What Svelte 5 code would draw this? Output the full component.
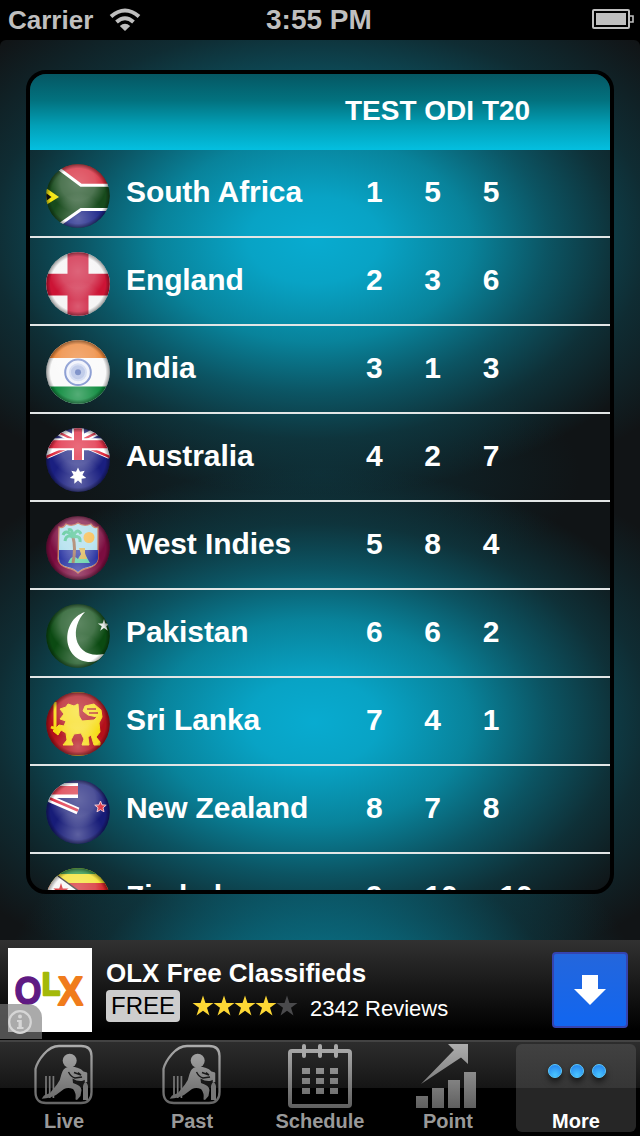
<script>
  const teams = [
    { name: "South Africa", flag: "za", ranks: [1, 5, 5] },
    { name: "England", flag: "en", ranks: [2, 3, 6] },
    { name: "India", flag: "in", ranks: [3, 1, 3] },
    { name: "Australia", flag: "au", ranks: [4, 2, 7] },
    { name: "West Indies", flag: "wi", ranks: [5, 8, 4] },
    { name: "Pakistan", flag: "pk", ranks: [6, 6, 2] },
    { name: "Sri Lanka", flag: "lk", ranks: [7, 4, 1] },
    { name: "New Zealand", flag: "nz", ranks: [8, 7, 8] },
    { name: "Zimbabwe", flag: "zw", ranks: [9, 10, 10] }
  ];

  const tabs = [
    { label: "Live", icon: "cricket" },
    { label: "Past", icon: "cricket" },
    { label: "Schedule", icon: "calendar" },
    { label: "Point", icon: "chart" },
    { label: "More", icon: "more" }
  ];

  let active = $state("More");

  // n-pointed star centred on cx, cy
  function star(cx, cy, n, outer, inner) {
    const pts = [];
    for (let i = 0; i < n * 2; i++) {
      const r = i % 2 ? inner : outer;
      const a = (Math.PI * i) / n - Math.PI / 2;
      pts.push(`${(cx + r * Math.cos(a)).toFixed(2)},${(cy + r * Math.sin(a)).toFixed(2)}`);
    }
    return pts.join(" ");
  }
</script>

{#snippet flagArt(code)}
  {#if code === "za"}
    <rect width="64" height="64" fill="#174a1c" />
    <path d="M10 0L34 20H64V0z" fill="#d51f32" />
    <path d="M10 64L35 46H64V64z" fill="#1c2588" />
    <path d="M12 4L35 21.3H64M13 61L35 45.5H64" fill="none" stroke="#fff" stroke-width="3" />
    <path d="M0 24L13 33L0 41z" fill="#f5e614" />
    <path d="M0 29L5.5 33L0 37z" fill="#111" />
  {:else if code === "en"}
    <rect width="64" height="64" fill="#f4f4f4" />
    <path d="M21.5 0H42.5V21.7H64V43.5H42.5V64H21.5V43.5H0V21.7H21.5z" fill="#cc1435" />
  {:else if code === "in"}
    <rect width="64" height="64" fill="#fafafa" />
    <rect width="64" height="18" fill="#ec7f2c" />
    <rect y="46.5" width="64" height="18" fill="#0b8a3c" />
    <circle cx="32" cy="32.3" r="12.8" fill="#eef1fb" stroke="#6f86c8" stroke-width="2" />
    <circle cx="32" cy="32.3" r="8" fill="#a9b9e2" stroke="#c9d4ef" stroke-width="2" />
    <circle cx="32" cy="32.3" r="3" fill="#4c68b4" />
  {:else if code === "au"}
    <rect width="64" height="64" fill="#1a1f80" />
    <path d="M0 27L32 13L64 27M6 0L32 13L58 0" fill="none" stroke="#fff" stroke-width="8" />
    <path d="M0 29L28 17M36 17L64 29M8 2L28 12M56 2L36 12" stroke="#dd2238" stroke-width="2.5" />
    <path d="M32 0V32M0 16.3H64" fill="none" stroke="#fff" stroke-width="12" />
    <path d="M32 0V32M0 16.3H64" fill="none" stroke="#de2038" stroke-width="8" />
    <polygon points={star(32, 48, 7, 8.5, 4.6)} fill="#fff" />
  {:else if code === "wi"}
    <rect width="64" height="64" fill="#7c0d40" />
    <path d="M13 11Q17 13 20 8Q26 11 32 7Q38 11 45 8Q48 13 52 11V43Q51 50 42 52Q36 53 32 57Q28 53 22 52Q13 50 12 43z" fill="#a8dcec" stroke="#c46a4b" stroke-width="1.3" />
    <path d="M13 34H52V43Q51 49 42 51Q36 52 32 56Q28 52 22 51Q13 49 13 43z" fill="#2530a0" />
    <circle cx="43" cy="21.5" r="5.5" fill="#f6b43a" />
    <path d="M22 47Q26 37 32 43Q35 36 40 40L44 47z" fill="#5ad0a0" />
    <path d="M27 21Q30 32 27 47" fill="none" stroke="#9a6a4c" stroke-width="3" />
    <path d="M27 21Q20 18 19 25M27 21Q20 12 17 19M27 21Q27 12 22 14M27 21Q31 11 35 18M27 21Q35 19 34 26" fill="none" stroke="#43c08c" stroke-width="3" />
    <path d="M33 32h6v5l2 6h-8l2-5z" fill="#d8b045" />
  {:else if code === "pk"}
    <rect width="64" height="64" fill="#0b4a12" />
    <path d="M39 8C14 16 15 58 45 58C50 58 55 55 58 50C29 56 22 25 39 8z" fill="#fff" />
    <polygon points={star(58, 21.5, 5, 6.5, 2.4)} fill="#e6ece6" />
  {:else if code === "lk"}
    <rect width="64" height="64" fill="#b3101a" />
    <path d="M0 0H64V4Q32-3 0 4zM0 64H64V59Q32 67 0 59z" fill="#e4b812" />
    <path d="M14 17L20 15L22 12L28 14L32 12L33 24L36 29L48 28L51 25L42 23L37 19L39 14L48 12L55 18L56 25L53 31L54 40L50 45L54 50V53H48L45 43L42 45L43 53H36L38 47L35 41L28 42L25 48L27 53H17L21 48L20 41L15 38L12 43L7 39L13 33L18 34L20 29L14 27L18 22z" fill="#f7dc14" stroke="#f7dc14" />
    <path d="M9 10V37M5 35L14 39" fill="none" stroke="#f7dc14" stroke-width="3" />
    <path d="M41 17H50M43 21H52" stroke="#b3101a" stroke-width="1.3" />
  {:else if code === "nz"}
    <rect width="64" height="64" fill="#171c78" />
    <path d="M0 3H32V18H0z" fill="#fff" />
    <path d="M0 6H32V14.500H0z" fill="#d92b3c" />
    <path d="M2 18L32 31" stroke="#fff" stroke-width="7" />
    <path d="M4 18.5L32 30.5" stroke="#dd2238" stroke-width="2.5" />
    <polygon points={star(54.5, 27, 5, 6, 2.6)} fill="#e02b3a" stroke="#f3c3cc" stroke-width="1" />
  {:else}
    <rect width="64" height="64" fill="#f3df1e" />
    <rect width="64" height="6" fill="#1e8a35" />
    <rect y="15" width="64" height="14" fill="#d2191f" />
    <path d="M0 0L12 8L34 24H0z" fill="#f6f6f6" />
    <path d="M12 8L34 24" stroke="#222" stroke-width="1.5" />
    <polygon points={star(15, 23, 5, 8, 3)} fill="#d2191f" />
  {/if}
{/snippet}

{#snippet cricketIcon()}
  <svg class="icon" viewBox="0 0 64 66">
    <path d="M3.5 27Q5 20 12 12Q19 4 27 4H49Q59.500 4 59.500 14V50Q59.500 61 49 61H14Q3.500 61 3.500 50z" fill="none" stroke="url(#iconFill)" stroke-width="2.300" />
    <circle cx="37.7" cy="18.7" r="7" fill="url(#iconFill)" />
    <path d="M14 34V56M17.7 34V56M21.4 34V56" stroke="#777" stroke-width="1.7" />
    <path d="M9.7 56.700L12 53.500L18 51L25 42.500Q28.500 38 29.500 32Q31 26 36 25Q46 24 51.500 29.500L55 30.500V37L50 39Q45 39.500 40.500 36.500L41 41Q49.500 43.500 49.500 48L48.500 54L45 58L43.500 57.500Q44.500 51 41 47Q36 45 32 47L24 53Q19 56 9.700 56.700z" fill="url(#iconFill)" />
    <path d="M36.500 30Q39 35 43 36L50 35M42 30.500L49 33L46 30.500" fill="none" stroke="#1a1a1a" stroke-width="1.400" />
    <path d="M54 31V40" stroke="#888" stroke-width="2.500" />
    <path d="M51 44Q53.500 36 56 44V58H51z" fill="#777" />
  </svg>
{/snippet}

<svg class="defs" width="0" height="0" aria-hidden="true">
  <defs>
    <linearGradient id="iconFill" gradientUnits="userSpaceOnUse" x1="0" y1="0" x2="0" y2="66">
      <stop offset="0" stop-color="#b0b0b0" />
      <stop offset="1" stop-color="#606060" />
    </linearGradient>
    <radialGradient id="gloss" cx="0.5" cy="0.3" r="0.45">
      <stop offset="0" stop-color="#fff" stop-opacity="0.34" />
      <stop offset="0.6" stop-color="#fff" stop-opacity="0.24" />
      <stop offset="1" stop-color="#fff" stop-opacity="0" />
    </radialGradient>
    <radialGradient id="rim">
      <stop offset="0.86" stop-color="#000" stop-opacity="0" />
      <stop offset="1" stop-color="#000" stop-opacity="0.4" />
    </radialGradient>
    <radialGradient id="shine" cx="0.5" cy="0.85" r="0.4">
      <stop offset="0" stop-color="#fff" stop-opacity="0.3" />
      <stop offset="1" stop-color="#fff" stop-opacity="0" />
    </radialGradient>
    <radialGradient id="dot" cx="0.5" cy="0.8" r="0.7">
      <stop offset="0" stop-color="#48c4ff" />
      <stop offset="1" stop-color="#2a8cf0" />
    </radialGradient>
    <clipPath id="round"><circle cx="32" cy="32" r="31.8" /></clipPath>
  </defs>
</svg>

<div class="phone">
  <header class="status">
    <div class="carrier">
      <span>Carrier</span>
      <svg width="32" height="24" viewBox="0 0 32 24" fill="none" stroke="#bfbfbf" stroke-width="4">
        <path d="M2 8.500Q16-3.500 30 8.500" />
        <path d="M7.500 14Q16 6.500 24.500 14" />
        <path d="M16 23L10.800 18Q16 13.500 21.200 18z" fill="#bfbfbf" stroke="none" />
      </svg>
    </div>
    <span class="time">3:55 PM</span>
    <svg class="battery" width="42" height="20" viewBox="0 0 42 20">
      <rect x="1" y="1" width="36" height="18" rx="1" fill="none" stroke="#bfbfbf" stroke-width="2" />
      <rect x="4" y="4" width="30" height="12" fill="#bfbfbf" />
      <path d="M38 7H41V13H38" fill="none" stroke="#bfbfbf" stroke-width="1.600" />
    </svg>
  </header>

  <main>
    <section class="card">
      <div class="head">TEST ODI T20</div>
      {#each teams as team}
        <div class="row">
          <svg class="flag" viewBox="0 0 64 64">
            <g clip-path="url(#round)">
              {@render flagArt(team.flag)}
              <circle cx="32" cy="32" r="32" fill="url(#gloss)" />
              <circle cx="32" cy="32" r="32" fill="url(#shine)" />
              <circle cx="32" cy="32" r="32" fill="url(#rim)" />
            </g>
          </svg>
          <span class="name">{team.name}</span>
          <span class="ranks">{team.ranks.join("     ")}</span>
        </div>
      {/each}
    </section>
  </main>

  <aside class="ad">
    <div class="logo">
      <svg width="84" height="84" viewBox="0 0 84 84" stroke-linejoin="round">
        <text x="6.500" y="56" font-size="39" textLength="27" lengthAdjust="spacingAndGlyphs" fill="#5f1a83" stroke="#5f1a83" stroke-width="1.500">O</text>
        <text x="34" y="47" font-size="31" textLength="18" lengthAdjust="spacingAndGlyphs" fill="#a3b90a" stroke="#a3b90a" stroke-width="2.500">L</text>
        <text x="50" y="57" font-size="41" textLength="25" lengthAdjust="spacingAndGlyphs" fill="#f07c1c" stroke="#f07c1c" stroke-width="2">X</text>
      </svg>
      <div class="info">
        <svg width="26" height="26" viewBox="0 0 26 26">
          <circle cx="13" cy="13" r="10.800" fill="none" stroke="#d6d6d6" stroke-width="2.200" />
          <circle cx="13" cy="7.500" r="2" fill="#d6d6d6" />
          <path d="M10 11H14.800V18H16.500V20H10V18H11.500V13H10z" fill="#d6d6d6" />
        </svg>
      </div>
    </div>
    <div class="about">
      <div class="title">OLX Free Classifieds</div>
      <div class="meta">
        <span class="free">FREE</span>
        <svg class="stars" width="106" height="22" viewBox="0 0 106 22">
          {#each [0, 1, 2, 3, 4] as i}
            <polygon points={star(11 + i * 21, 11.5, 5, 11, 4.2)} fill={i < 4 ? "#fdd835" : "#4a4a4c"} />
          {/each}
        </svg>
        <span class="reviews">2342 Reviews</span>
      </div>
    </div>
    <button class="install" aria-label="Install">
      <svg width="32" height="30" viewBox="0 0 32 30">
        <path d="M8 0H24V14H32L16 30L0 14H8z" fill="#fff" />
      </svg>
    </button>
  </aside>

  <nav>
    {#each tabs as tab}
      <button class="tab" class:active={active === tab.label} onclick={() => (active = tab.label)}>
        {#if tab.icon === "cricket"}
          {@render cricketIcon()}
        {:else if tab.icon === "calendar"}
          <svg class="icon" viewBox="0 0 64 66">
            <g fill="none" stroke="url(#iconFill)" stroke-width="4">
              <rect x="2" y="9" width="60" height="55" rx="2" />
              <path d="M16 4V14M32.010 4V14M48 4V14" stroke="#a8a8a8" stroke-linecap="round" />
            </g>
            {#each [26, 36, 46] as y}
              {#each [14, 28, 42] as x}
                <rect {x} {y} width="8" height="6" fill="url(#iconFill)" />
              {/each}
            {/each}
          </svg>
        {:else if tab.icon === "chart"}
          <svg class="icon" viewBox="0 0 64 66">
            <path d="M5 42L38 8L32 2H52V22L45 15.500z" fill="url(#iconFill)" />
            <path d="M0 54H12V66H0zM16 46H28V66H16zM32 38H44V66H32zM48 30H60V66H48z" fill="url(#iconFill)" />
          </svg>
        {:else}
          <svg class="icon dots" viewBox="0 0 64 66">
            {#each [11, 33, 55] as cx}
              <circle {cx} cy="29" r="6.500" fill="url(#dot)" stroke="#5cc8f8" stroke-width="1" />
            {/each}
          </svg>
        {/if}
        <span>{tab.label}</span>
      </button>
    {/each}
  </nav>
</div>

<style>
  :global(body) {
    margin: 0;
    background: #000;
  }

  .defs {
    position: absolute;
  }

  svg {
    display: block;
    flex: none;
  }

  button {
    font: inherit;
    border: 0;
    padding: 0;
  }

  .phone {
    width: 640px;
    height: 1136px;
    overflow: hidden;
    display: flex;
    flex-direction: column;
    background: #000;
    color: #fff;
    font-family: "Liberation Sans", Arial, sans-serif;
    font-weight: bold;
  }

  .status {
    height: 40px;
    box-sizing: border-box;
    padding: 0 6px 0 8px;
    display: grid;
    grid-template-columns: 258px 1fr 42px;
    align-items: center;
    color: #bfbfbf;
    font-size: 28px;
  }

  .carrier {
    display: flex;
    align-items: center;
    gap: 16px;
    font-size: 26px;
  }

  .battery {
    margin-top: -2px;
  }

  main {
    height: 900px;
    box-sizing: border-box;
    padding: 30px 26px 46px;
    border-radius: 6px 6px 0 0;
    background:
      radial-gradient(ellipse 330px 270px at 320px 1000px, #0890ad, rgba(9, 104, 124, 0.8) 45%, rgba(13, 60, 70, 0.5) 75%, transparent),
      radial-gradient(ellipse 440px 280px at 320px 195px, #08a4c8, rgba(9, 112, 133, 0.8) 45%, rgba(14, 60, 70, 0.6) 75%, transparent),
      radial-gradient(ellipse 440px 280px at 320px 680px, #08a4c8, rgba(9, 112, 133, 0.8) 45%, rgba(14, 60, 70, 0.6) 75%, transparent),
      #111416;
  }

  .card {
    height: 824px;
    box-sizing: border-box;
    border: 4px solid #000;
    border-radius: 20px;
    overflow: hidden;
    background:
      radial-gradient(ellipse 390px 255px at 284px 166px, #08abd0, #08a3c5 17%, rgba(8, 137, 162, 0.95) 40%, rgba(11, 91, 107, 0.9) 60%, rgba(14, 58, 67, 0.75) 78%, transparent),
      radial-gradient(ellipse 390px 255px at 284px 648px, #08abd0, #08a3c5 17%, rgba(8, 137, 162, 0.95) 40%, rgba(11, 91, 107, 0.9) 60%, rgba(14, 58, 67, 0.75) 78%, transparent),
      radial-gradient(ellipse 260px 120px at 290px 400px, #0e2a31, transparent),
      #101416;
  }

  .head {
    height: 76px;
    box-sizing: border-box;
    padding-left: 315px;
    line-height: 73px;
    font-size: 28px;
    background: linear-gradient(#055763, #02727f 35%, #02a0b7 68%, #04bfe0);
  }

  .row {
    height: 88px;
    box-sizing: border-box;
    border-bottom: 2px solid #e2e6e6;
    padding: 2px 0 0 16px;
    display: flex;
    align-items: center;
    font-size: 30px;
  }

  .flag {
    width: 64px;
    height: 64px;
    margin: 4px 16px 0 0;
  }

  .name {
    width: 240px;
    letter-spacing: -0.1px;
  }

  .name,
  .ranks {
    margin-top: -5px;
    white-space: pre;
  }

  .ad {
    height: 98px;
    box-sizing: border-box;
    padding: 8px 12px 0 8px;
    display: flex;
    background: linear-gradient(#313131, #000 92%);
  }

  .logo {
    position: relative;
    width: 84px;
    height: 84px;
    background: #fff;
  }

  .info {
    position: absolute;
    left: -8px;
    bottom: -7px;
    width: 42px;
    height: 35px;
    box-sizing: border-box;
    padding: 5px 7px;
    border-radius: 0 14px 0 0;
    background: rgba(125, 125, 125, 0.65);
  }

  .about {
    flex: 1;
    padding: 10px 0 0 14px;
  }

  .title {
    font-size: 26px;
    line-height: 30px;
  }

  .meta {
    display: flex;
    align-items: center;
    margin-top: 2px;
    font-weight: normal;
  }

  .free {
    width: 74px;
    height: 32px;
    border-radius: 4px;
    background: #cdcdcd;
    color: #000;
    font-size: 24px;
    line-height: 32px;
    text-align: center;
  }

  .stars {
    margin-left: 12px;
  }

  .reviews {
    margin: 5px 0 0 12px;
    font-size: 22px;
  }

  .install {
    width: 76px;
    height: 76px;
    box-sizing: border-box;
    margin-top: 4px;
    border: 2px solid #3544b0;
    border-radius: 4px;
    background: linear-gradient(#2466dc, #1166f0);
    display: grid;
    place-items: center;
  }

  nav {
    height: 96px;
    margin-top: 2px;
    box-sizing: border-box;
    border-top: 2px solid #434343;
    display: grid;
    grid-template-columns: repeat(5, 128px);
    background: linear-gradient(#2d2d2d, #151515 46px, #000 46px);
  }

  .tab {
    display: flex;
    flex-direction: column;
    align-items: center;
    box-sizing: border-box;
    height: 88px;
    margin: 2px 4px;
    border-radius: 6px;
    background: none;
    color: #999;
    font-size: 20px;
    line-height: 24px;
  }

  .tab.active {
    color: #fff;
    background: linear-gradient(#414141, #363636 44px, #262626 44px);
  }

  .icon {
    width: 64px;
    height: 66px;
    margin-top: -2px;
    margin-bottom: 1px;
  }

  .dots {
    filter: drop-shadow(0 4px 3px rgba(0, 0, 0, 0.6));
  }
</style>
